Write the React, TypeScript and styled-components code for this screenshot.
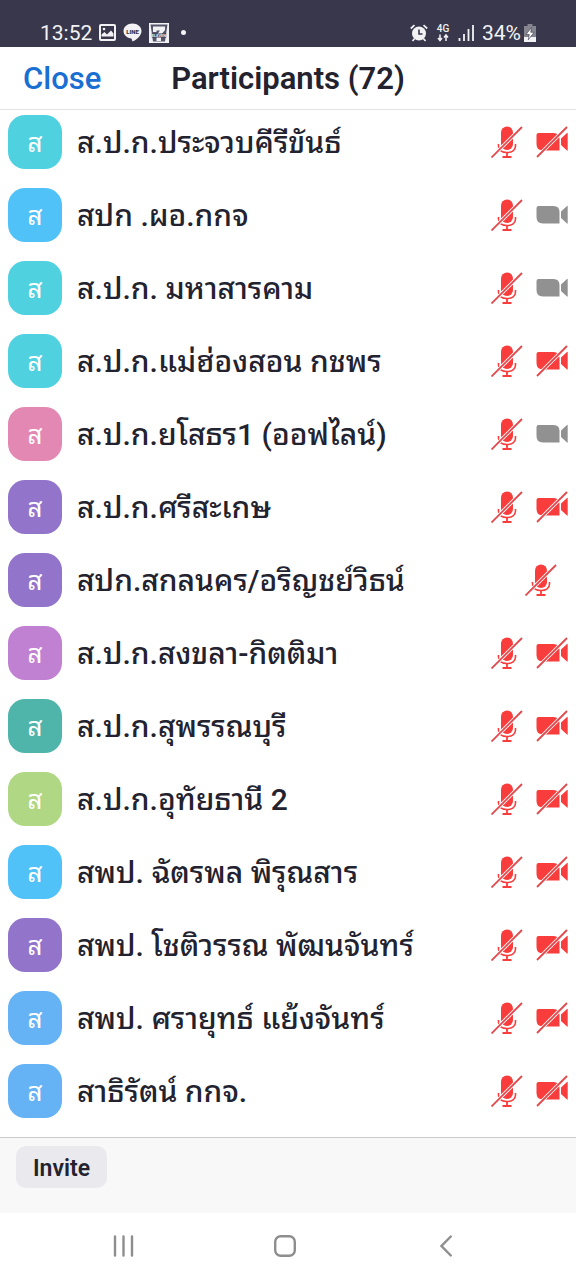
import React from "react";
import styled, { createGlobalStyle } from "styled-components";

const GlobalStyle = createGlobalStyle`
  *, *::before, *::after { box-sizing: border-box; }
  body {
    margin: 0;
    background: #ffffff;
    color: #23222f;
    font-family: Roboto, "Noto Sans Thai Looped", "Noto Looped Thai", Loma, Waree, Garuda, "Noto Sans", sans-serif;
  }
  button { font: inherit; color: inherit; border: 0; background: none; padding: 0; cursor: pointer; }
  svg { display: block; flex: none; }
`;

const Screen = styled.div`
  min-height: 100vh;
  display: flex;
  flex-direction: column;
`;

const StatusBar = styled.div`
  height: 47px;
  padding: 18px 40px 0;
  display: flex;
  justify-content: space-between;
  background: #38374b;
  color: #f2f2f5;
`;

const StatusGroup = styled.div<{ $gap: number }>`
  height: 29px;
  display: flex;
  align-items: center;
  gap: ${(p) => p.$gap}px;
`;

const StatusText = styled.span`
  font-size: 21px;
  line-height: 28px;
`;

const MoreDot = styled.span`
  width: 5px;
  height: 5px;
  margin-left: 5px;
  border-radius: 50%;
  background: #f2f2f5;
`;

const Header = styled.header`
  height: 63px;
  padding: 2px 23px 0;
  display: grid;
  grid-template-columns: 1fr auto 1fr;
  align-items: center;
  border-bottom: 1px solid #e4e4e8;
`;

const CloseButton = styled.button`
  justify-self: start;
  color: #1a6fd2;
  font-size: 31px;
  font-weight: 500;
  line-height: 40px;
`;

const Title = styled.h1`
  margin: 0;
  font-size: 31px;
  font-weight: 600;
  line-height: 40px;
`;

const List = styled.ul`
  flex: 1;
  margin: 0;
  padding: 5px 0 19px;
  list-style: none;
  display: flex;
  flex-direction: column;
  gap: 19px;
`;

const Row = styled.li<{ $end: number }>`
  height: 54px;
  padding: 0 ${(p) => p.$end}px 0 8px;
  display: flex;
  align-items: center;
`;

const Avatar = styled.span<{ $color: string }>`
  width: 54px;
  height: 54px;
  padding-top: 2px;
  border-radius: 17px;
  flex: none;
  display: flex;
  align-items: center;
  justify-content: center;
  background: ${(p) => p.$color};
  color: #ffffff;
  font-size: 26px;
  line-height: 52px;
`;

const Name = styled.span`
  flex: 1;
  min-width: 0;
  padding: 2px 0 0 15px;
  font-size: 30px;
  font-weight: 500;
  line-height: 54px;
  white-space: nowrap;
`;

const Devices = styled.span`
  display: flex;
  gap: 13px;
`;

const Footer = styled.footer`
  height: 76px;
  padding: 8px 16px;
  border-top: 1px solid #cbcbcf;
  background: #f8f8f8;
`;

const InviteButton = styled.button`
  height: 42px;
  padding: 2px 17px 0;
  border-radius: 10px;
  background: #e9e9ee;
  font-size: 23px;
  font-weight: 600;
`;

const NavBar = styled.nav`
  height: 67px;
  padding: 0 50px 2px 43px;
  display: grid;
  grid-template-columns: repeat(3, 1fr);
`;

const NavButton = styled.button`
  display: flex;
  align-items: center;
  justify-content: center;
`;

const RED = "#f93c3c";

const MicOff = () => (
  <svg width="32" height="32" viewBox="0 0 32 32" role="img" aria-label="Muted">
    <rect x="10" y="0.500" width="12" height="23.500" rx="6" fill={RED} />
    <path d="M7.500 18V20C7.500 24 11 26.500 16 26.500S24.500 24 24.500 20V18" fill="none" stroke={RED} strokeWidth="1.600" />
    <path d="M16 26.500V31M11.500 31H20.500" stroke={RED} strokeWidth="1.800" />
    <path d="M0.500 31.500L31 1" stroke="#fff" strokeWidth="3.600" />
    <path d="M0.500 31.500L31 1" stroke="#e0484c" strokeWidth="1.800" />
  </svg>
);

const CameraShape = () => (
  <>
    <path d="M2.500 7H17.500Q23.500 7 23.500 13V24.500H7Q0.500 24.500 0.500 18V9Q0.500 7 2.500 7Z" />
    <path d="M25 12.500L31 7Q31.700 6.500 31.700 7.500V24Q31.700 25 31 24.500L25 19Z" />
  </>
);

const CameraOff = () => (
  <svg width="32" height="32" viewBox="0 0 32 32" role="img" aria-label="Camera off">
    <g fill={RED}><CameraShape /></g>
    <path d="M1 31L31 1" stroke="#fff" strokeWidth="3.600" />
    <path d="M1 31L31 1" stroke="#e0484c" strokeWidth="1.800" />
  </svg>
);

const CameraOn = () => (
  <svg width="32" height="32" viewBox="0 0 32 32" role="img" aria-label="Camera on">
    <g fill="#919191"><CameraShape /></g>
  </svg>
);

const PictureIcon = () => (
  <svg width="17" height="17" viewBox="0 0 17 17" aria-hidden="true">
    <rect x="1" y="1" width="15" height="15" rx="1" fill="none" stroke="#f2f2f5" strokeWidth="2" />
    <path d="M2.500 12.500V10.500L5.500 8L8 10.500L12 6.500L14.500 9.500V12.500Z" fill="#f2f2f5" />
    <circle cx="5" cy="5" r="1.300" fill="#f2f2f5" />
  </svg>
);

const LineIcon = () => (
  <svg width="19" height="19" viewBox="0 0 19 19" aria-hidden="true">
    <path d="M9.500 0.500C4.500 0.500 0.500 3.900 0.500 8C0.500 12 4 15 8.500 15.600L9.500 18.600C14 16.500 18.500 12.500 18.500 8C18.500 3.900 14.500 0.500 9.500 0.500Z" fill="#f2f2f5" />
    <text x="9.500" y="10.500" fontSize="6" fontWeight="900" textAnchor="middle" fill="#38374b" fontFamily="Roboto">LINE</text>
  </svg>
);

const SevenIcon = () => (
  <svg width="20" height="20" viewBox="0 0 20 20" aria-hidden="true">
    <rect width="20" height="20" fill="#f2f2f5" />
    <path d="M1.500 1.500H18.500L16 18.500H4Z" fill="#55546a" />
    <path d="M4 3.500H16V7L12 12V18H7.500V12.500L11 7.500H7.500V9H4Z" fill="#f2f2f5" />
    <rect x="2.800" y="10.500" width="14.400" height="4" fill="#38374b" />
    <text x="10" y="13.900" fontSize="4" fontWeight="700" textAnchor="middle" fill="#f2f2f5" fontFamily="Roboto">ELEVEN</text>
  </svg>
);

const AlarmIcon = () => (
  <svg width="18" height="18" viewBox="0 0 18 18" aria-hidden="true">
    <circle cx="9" cy="9.500" r="7" fill="#f2f2f5" />
    <path d="M9 5.500V10H12.500" fill="none" stroke="#38374b" strokeWidth="1.600" />
    <path d="M0.800 4.500L4.500 1.200M17.200 4.500L13.500 1.200M2.500 17L4.500 14.800M15.500 17L13.500 14.800" stroke="#f2f2f5" strokeWidth="1.700" />
  </svg>
);

const NetworkIcon = () => (
  <svg width="14" height="18" viewBox="0 0 14 18" aria-hidden="true">
    <text x="7" y="8" fontSize="10" fontWeight="500" textAnchor="middle" fill="#f2f2f5" fontFamily="Roboto">4G</text>
    <path d="M4 10.500V16M2 14L4 16.500L6 14M10 17V11.500M8 13.500L10 11L12 13.500" fill="none" stroke="#f2f2f5" strokeWidth="1.500" />
  </svg>
);

const SignalIcon = () => (
  <svg width="16" height="17" viewBox="0 0 16 17" aria-hidden="true">
    <path d="M1.500 14V17M6 10V17M10.500 5V17M15 1V17" stroke="#f2f2f5" strokeWidth="1.800" />
  </svg>
);

const BatteryIcon = () => (
  <svg width="12" height="18" viewBox="0 0 12 18" aria-hidden="true">
    <path d="M3.500 0H8.500V2H12V18H0V2H3.500Z" fill="#85848f" />
    <path d="M0 13H12V18H0Z" fill="#f2f2f5" />
    <path d="M7.500 3.500L2 10.500H5.300L4.300 15.800L10 8.300H6.700Z" fill="#fff" stroke="#38374b" strokeWidth="0.600" />
  </svg>
);

type Camera = "on" | "off" | "none";
type Participant = { name: string; color: string; camera: Camera };

const participants: Participant[] = [
  { name: "ส.ป.ก.ประจวบคีรีขันธ์", color: "#50d1e0", camera: "off" },
  { name: "สปก .ผอ.กกจ", color: "#51c2f8", camera: "on" },
  { name: "ส.ป.ก. มหาสารคาม", color: "#50d1e0", camera: "on" },
  { name: "ส.ป.ก.แม่ฮ่องสอน กชพร", color: "#50d1e0", camera: "off" },
  { name: "ส.ป.ก.ยโสธร1 (ออฟไลน์)", color: "#e388b3", camera: "on" },
  { name: "ส.ป.ก.ศรีสะเกษ", color: "#9275ca", camera: "off" },
  { name: "สปก.สกลนคร/อริญชย์วิธน์", color: "#9275ca", camera: "none" },
  { name: "ส.ป.ก.สงขลา-กิตติมา", color: "#c081d2", camera: "off" },
  { name: "ส.ป.ก.สุพรรณบุรี", color: "#4fb5ab", camera: "off" },
  { name: "ส.ป.ก.อุทัยธานี 2", color: "#afd784", camera: "off" },
  { name: "สพป. ฉัตรพล พิรุณสาร", color: "#51c2f8", camera: "off" },
  { name: "สพป. โชติวรรณ พัฒนจันทร์", color: "#9275ca", camera: "off" },
  { name: "สพป. ศรายุทธ์ แย้งจันทร์", color: "#65b3f5", camera: "off" },
  { name: "สาธิรัตน์ กกจ.", color: "#65b3f5", camera: "off" },
];

export default function App() {
  return (
    <Screen>
      <GlobalStyle />
      <StatusBar>
        <StatusGroup $gap={7}>
          <StatusText>13:52</StatusText>
          <PictureIcon />
          <LineIcon />
          <SevenIcon />
          <MoreDot />
        </StatusGroup>
        <StatusGroup $gap={8}>
          <AlarmIcon />
          <NetworkIcon />
          <SignalIcon />
          <StatusGroup $gap={3}>
            <StatusText>34%</StatusText>
            <BatteryIcon />
          </StatusGroup>
        </StatusGroup>
      </StatusBar>
      <Header>
        <CloseButton type="button">Close</CloseButton>
        <Title>Participants (72)</Title>
      </Header>
      <List>
        {participants.map((p) => (
          <Row key={p.name} $end={p.camera === "none" ? 19 : 8}>
            <Avatar $color={p.color}>ส</Avatar>
            <Name>{p.name}</Name>
            <Devices>
              <MicOff />
              {p.camera === "off" && <CameraOff />}
              {p.camera === "on" && <CameraOn />}
            </Devices>
          </Row>
        ))}
      </List>
      <Footer>
        <InviteButton type="button">Invite</InviteButton>
      </Footer>
      <NavBar>
        <NavButton type="button" aria-label="Recent apps">
          <svg width="22" height="22" viewBox="0 0 22 22" fill="none" stroke="#8e8e8e" strokeWidth="2.400" strokeLinecap="round">
            <path d="M2 1.500V20.500M10.500 1.500V20.500M19 1.500V20.500" />
          </svg>
        </NavButton>
        <NavButton type="button" aria-label="Home">
          <svg width="22" height="22" viewBox="0 0 22 22" fill="none" stroke="#8e8e8e" strokeWidth="2.400">
            <rect x="1.200" y="1.200" width="19.600" height="19.600" rx="5.500" />
          </svg>
        </NavButton>
        <NavButton type="button" aria-label="Back">
          <svg width="12" height="22" viewBox="0 0 12 22" fill="none" stroke="#8e8e8e" strokeWidth="2.400" strokeLinecap="round">
            <path d="M10.800 1.500L1.500 11L10.800 20.500" />
          </svg>
        </NavButton>
      </NavBar>
    </Screen>
  );
}
